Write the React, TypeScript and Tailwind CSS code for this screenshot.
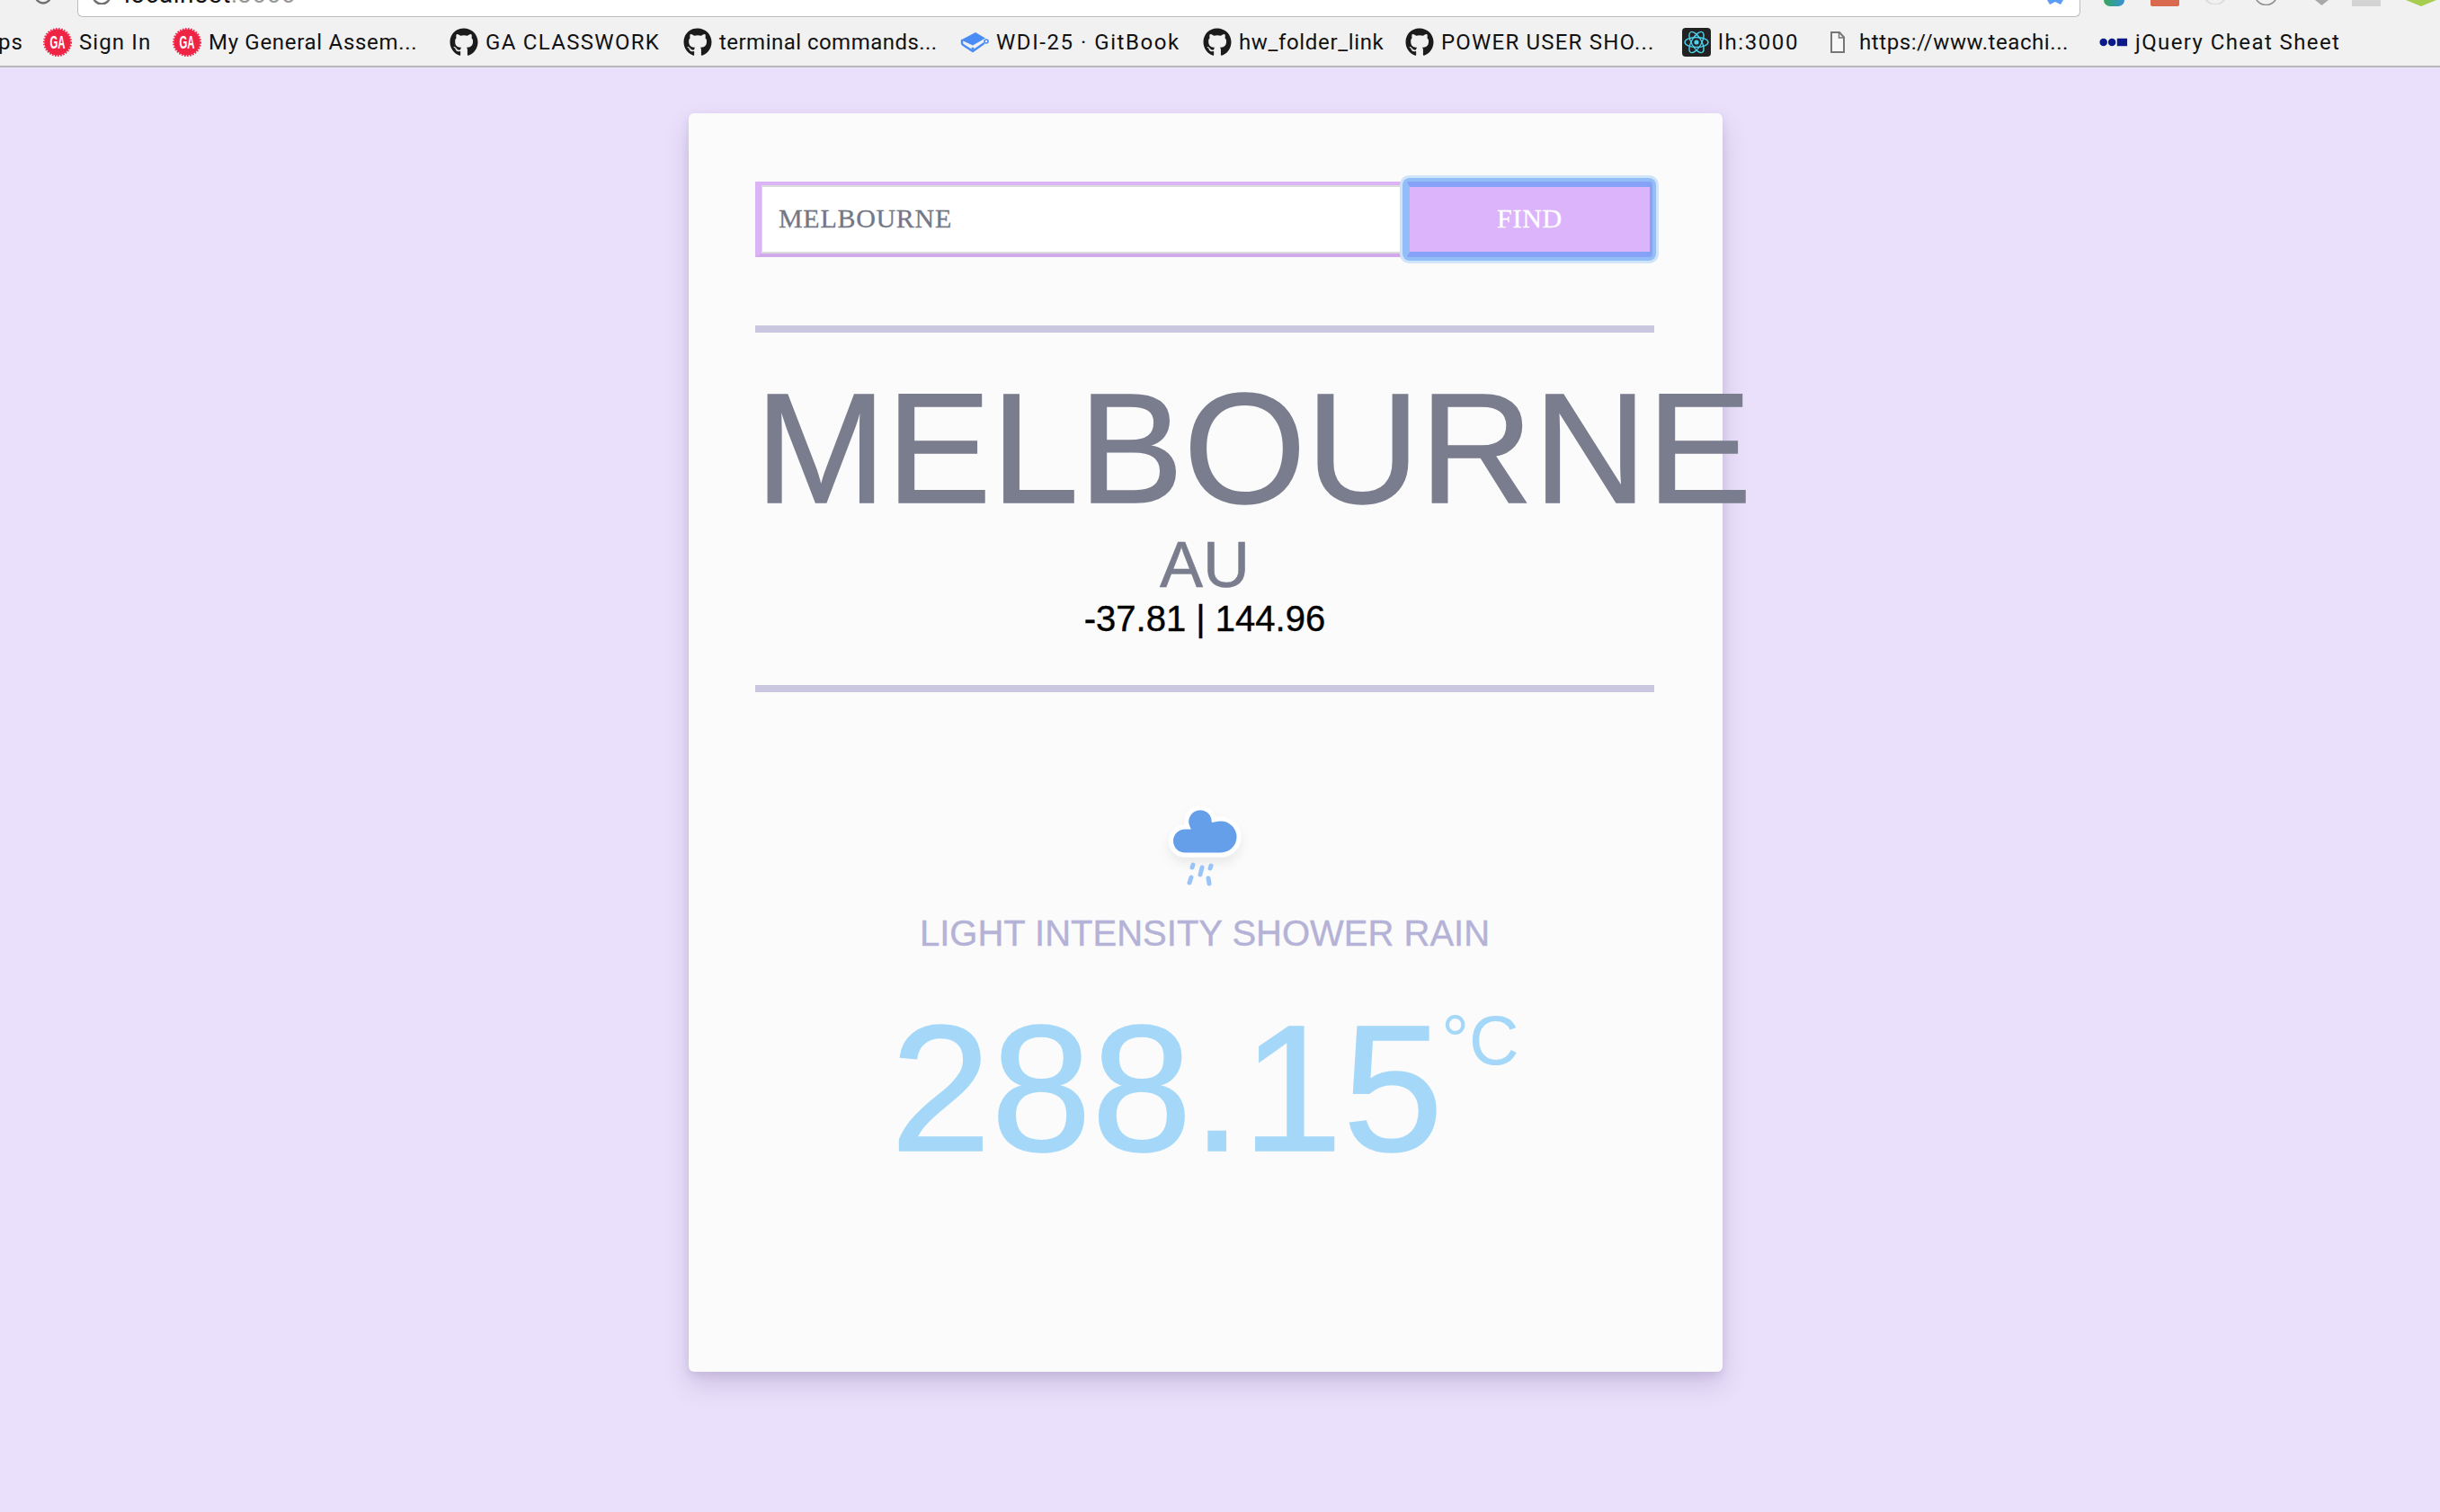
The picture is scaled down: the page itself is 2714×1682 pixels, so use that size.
import React from "react";
import { FaGithub } from "react-icons/fa";

function GA() {
  return (
    <svg viewBox="0 0 32 32" className="h-[32px] w-[32px] shrink-0">
      <circle cx="16" cy="16" r="14.5" fill="#ef2344" />
      <circle cx="16" cy="16" r="15" fill="none" stroke="#ef2344" strokeWidth="2" strokeDasharray="1.6 1.5" />
      <text x="16" y="23" textAnchor="middle" textLength="17" lengthAdjust="spacingAndGlyphs" fontFamily="Liberation Sans, sans-serif" fontWeight="700" fontSize="20" fill="#fff">
        GA
      </text>
    </svg>
  );
}
function Gh() {
  return <FaGithub className="h-[32px] w-[32px] shrink-0 text-[#1b1b1b]" />;
}
function Book() {
  return (
    <svg viewBox="0 0 32 24" className="h-[24px] w-[32px] shrink-0">
      <path d="M1 9.5 17 1l11 6.5-14 8z" fill="#4a8cf5" />
      <path d="M2 10v3c0 1 1 2 2 2.5l10 6.5 12-8.5" fill="none" stroke="#4a8cf5" strokeWidth="2.4" strokeLinejoin="round" strokeLinecap="round" />
      <circle cx="29" cy="11" r="2" fill="none" stroke="#4a8cf5" strokeWidth="1.6" />
      <circle cx="14" cy="19" r="1.6" fill="#4a8cf5" />
    </svg>
  );
}
function ReactIco() {
  return (
    <svg viewBox="0 0 32 32" className="h-[32px] w-[32px] shrink-0">
      <rect width="32" height="32" rx="4" fill="#222" />
      <g fill="none" stroke="#4fd0ee" strokeWidth="1.4">
        <ellipse cx="16" cy="16" rx="13" ry="5.5" />
        <ellipse cx="16" cy="16" rx="13" ry="5.5" transform="rotate(60 16 16)" />
        <ellipse cx="16" cy="16" rx="13" ry="5.5" transform="rotate(120 16 16)" />
      </g>
      <circle cx="16" cy="16" r="2.6" fill="#4fd0ee" />
    </svg>
  );
}
function Doc() {
  return (
    <div className="flex h-[32px] w-[32px] shrink-0 items-center justify-center">
      <svg viewBox="0 0 16 24" className="h-[24px] w-[16px]">
        <path d="M1 1h9l5 5.5V23H1z" fill="#f7f7f7" stroke="#777" strokeWidth="2" />
        <path d="M9.5 1v6H15" fill="none" stroke="#777" strokeWidth="1.5" />
      </svg>
    </div>
  );
}
function Jq() {
  return (
    <svg viewBox="0 0 34 12" className="h-[12px] w-[32px] shrink-0">
      <circle cx="5" cy="6" r="4.5" fill="#0a1a8a" />
      <circle cx="15" cy="6" r="4.5" fill="#0a1a8a" />
      <rect x="21" y="1.5" width="12" height="9" fill="#0a1a8a" />
    </svg>
  );
}
function Mark({ icon, label, cls, text }: { icon: React.ReactNode; label: string; cls: string; text: string }) {
  return (
    <div className={`flex shrink-0 items-center gap-[8px] ${cls}`}>
      {icon}
      <span className={`whitespace-nowrap ${text}`}>{label}</span>
    </div>
  );
}

function Cloud() {
  return (
    <svg viewBox="0 0 200 140" className="h-[140px] w-[200px]">
      <defs>
        <filter id="s" x="-30%" y="-30%" width="160%" height="190%">
          <feDropShadow dx="0" dy="7" stdDeviation="6" floodColor="#000" floodOpacity="0.07" />
        </filter>
      </defs>
      <path
        d="M78 81a15.5 15.5 0 0 1 0-31h3A15.2 15.2 0 1 1 110 42q4-1 8-1c11 0 20 9 20 20s-9 20-20 20z"
        fill="#659fe9"
        stroke="#fff"
        strokeWidth="5"
        filter="url(#s)"
      />
      <g stroke="#9bc4f6" strokeWidth="5" strokeLinecap="round">
        <path d="M87 92l-1 3" />
        <path d="M97 95l-2 8" />
        <path d="M107 93l-1 3" />
        <path d="M85 106l-2 6" />
        <path d="M104 107l1 6" />
      </g>
    </svg>
  );
}

export default function App() {
  return (
    <div className="flex h-[1682px] w-[2714px] flex-col overflow-hidden bg-[#eae0fb] font-['Liberation_Sans',sans-serif]">
      <header className="h-[75px] shrink-0 border-b-2 border-[#b9b6bc] bg-[#f1f1f1]">
        <div className="flex h-[19px] items-start overflow-hidden pl-[38px]">
          <svg viewBox="0 0 20 5" className="mr-[28px] h-[5px] w-[20px] shrink-0">
            <circle cx="10" cy="-5" r="8.5" fill="none" stroke="#6f6f6f" strokeWidth="2.4" />
          </svg>
          <div className="flex h-[19px] w-[2228px] shrink-0 items-start rounded-b-[6px] border border-t-0 border-[#bdbdbd] bg-white pl-[15px]">
            <svg viewBox="0 0 22 5" className="mr-[14px] h-[5px] w-[22px] shrink-0">
              <circle cx="11" cy="-5" r="9.5" fill="none" stroke="#6f6f6f" strokeWidth="2.4" />
            </svg>
            <div className="-mt-[21px] font-['Roboto',sans-serif] text-[28px] leading-[30px] tracking-[0.5px] text-[#111]">
              localhost<span className="text-[#999]">:3000</span>
            </div>
            <svg viewBox="0 0 18 5" className="ml-auto mr-[18px] h-[5px] w-[18px] shrink-0">
              <path d="M0 0h18l-3 5-6-3-6 3z" fill="#5b9cf8" />
            </svg>
          </div>
          <div className="ml-[26px] h-[7px] w-[23px] shrink-0 rounded-b-[8px] bg-gradient-to-r from-[#3aa655] to-[#3a8fd8]" />
          <div className="ml-[29px] h-[7px] w-[32px] shrink-0 rounded-b-[2px] bg-[#d9694f]" />
          <svg viewBox="0 0 28 5" className="ml-[26px] h-[5px] w-[28px] shrink-0">
            <circle cx="14" cy="-7" r="12" fill="none" stroke="#dedede" strokeWidth="2.4" />
          </svg>
          <svg viewBox="0 0 29 6" className="ml-[28px] h-[6px] w-[29px] shrink-0">
            <circle cx="14.5" cy="-7" r="12.5" fill="none" stroke="#8d8d8d" strokeWidth="1.6" />
          </svg>
          <svg viewBox="0 0 15 6" className="ml-[40px] h-[6px] w-[15px] shrink-0">
            <path d="M0 0h15L7.5 6z" fill="#a9a9a9" />
          </svg>
          <div className="ml-[26px] h-[7px] w-[32px] shrink-0 bg-[#d3d3d3]" />
          <svg viewBox="0 0 34 7" className="ml-[28px] h-[7px] w-[34px] shrink-0">
            <path d="M0 0h34L17 7z" fill="#a6cc50" />
          </svg>
        </div>
        <div className="flex h-[54px] items-center overflow-hidden pt-[2px] font-['Roboto',sans-serif] text-[24px] text-[#111]">
          <span className="-ml-[2px] w-[50px] shrink-0 tracking-[0.9px]">ps</span>
          <Mark icon={<GA />} label="Sign In" cls="w-[144px]" text="tracking-[1.1px]" />
          <Mark icon={<GA />} label="My General Assem..." cls="w-[308px]" text="tracking-[0.7px]" />
          <Mark icon={<Gh />} label="GA CLASSWORK" cls="w-[260px]" text="tracking-[1.3px]" />
          <Mark icon={<Gh />} label="terminal commands..." cls="w-[308px]" text="tracking-[0.47px]" />
          <Mark icon={<Book />} label="WDI-25 · GitBook" cls="w-[270px]" text="tracking-[1.55px]" />
          <Mark icon={<Gh />} label="hw_folder_link" cls="w-[225px]" text="tracking-[0.65px]" />
          <Mark icon={<Gh />} label="POWER USER SHO..." cls="w-[308px]" text="tracking-[1.2px]" />
          <Mark icon={<ReactIco />} label="lh:3000" cls="w-[157px]" text="tracking-[1.6px]" />
          <Mark icon={<Doc />} label="https://www.teachi..." cls="w-[307px]" text="tracking-[0.57px]" />
          <Mark icon={<Jq />} label="jQuery Cheat Sheet" cls="" text="tracking-[1.4px]" />
        </div>
      </header>

      <main className="flex pl-[766px] pt-[51px]">
        <section className="flex h-[1400px] w-[1150px] flex-col rounded-[6px] bg-[#fbfbfb] px-[74px] pt-[76px] shadow-[0_14px_28px_rgba(90,70,130,0.2),0_4px_10px_rgba(90,70,130,0.12)]">
          <div className="flex h-[84px] w-[1002px] items-stretch font-['Liberation_Serif',serif] text-[30px] tracking-[0.7px]">
            <div className="flex w-[724px] items-center border-y-[4px] border-l-[7px] border-t-[#dbb4f8] border-b-[#cfa9ea] border-l-[#dbb4f8] bg-white pb-[3px] pl-[19px] text-[#747786] shadow-[inset_1px_2px_0_#dcdcdc,inset_0_-2px_0_#dcdcdc] [-webkit-text-stroke:0.3px_#747786]">
              MELBOURNE
            </div>
            <button className="z-10 flex w-[274px] items-center justify-center rounded-[4px] border-y-[6px] border-l-[4px] border-r-[3px] border-y-[#86a2f6] border-l-[#92bdf6] border-r-[#86a2f6] bg-[#dcb4fb] pb-[3px] text-white shadow-[0_0_0_4px_#92bdf6,0_0_0_7px_#cfe3f9] [-webkit-text-stroke:0.3px_#ffffff]">
              FIND
            </button>
          </div>
          <div className="mt-[76px] h-[8px] w-[1000px] bg-[#c9c7e0]" />
          <div className="w-[1000px] text-center">
            <h1 className="mt-[39px] whitespace-nowrap text-left text-[175px] leading-[180px] text-[#7a7d8d] [-webkit-text-stroke:1.5px_#7a7d8d]">
              MELBOURNE
            </h1>
            <div className="mt-[1px] text-[72px] leading-[76px] text-[#7a7d8d] [-webkit-text-stroke:0.6px_#7a7d8d]">AU</div>
            <div className="-mt-[1px] text-[40px] leading-[46px] text-black [-webkit-text-stroke:0.4px_#000000]">-37.81 | 144.96</div>
          </div>
          <div className="mt-[51px] h-[8px] w-[1000px] bg-[#c9c7e0]" />
          <div className="flex w-[1000px] flex-col items-center">
            <div className="mt-[100px]">
              <Cloud />
            </div>
            <div className="mt-[5px] text-[40px] leading-[46px] text-[#b4b2d6] [-webkit-text-stroke:0.4px_#b4b2d6]">LIGHT INTENSITY SHOWER RAIN</div>
            <div className="mt-[50px] flex items-start text-[201px] leading-[200px] text-[#a5d8f8] [-webkit-text-stroke:1.5px_#a5d8f8]">
              288.15
              <span className="-ml-[2px] mt-[6px] text-[77px] leading-[80px] [-webkit-text-stroke:0]">°C</span>
            </div>
          </div>
        </section>
      </main>
    </div>
  );
}
